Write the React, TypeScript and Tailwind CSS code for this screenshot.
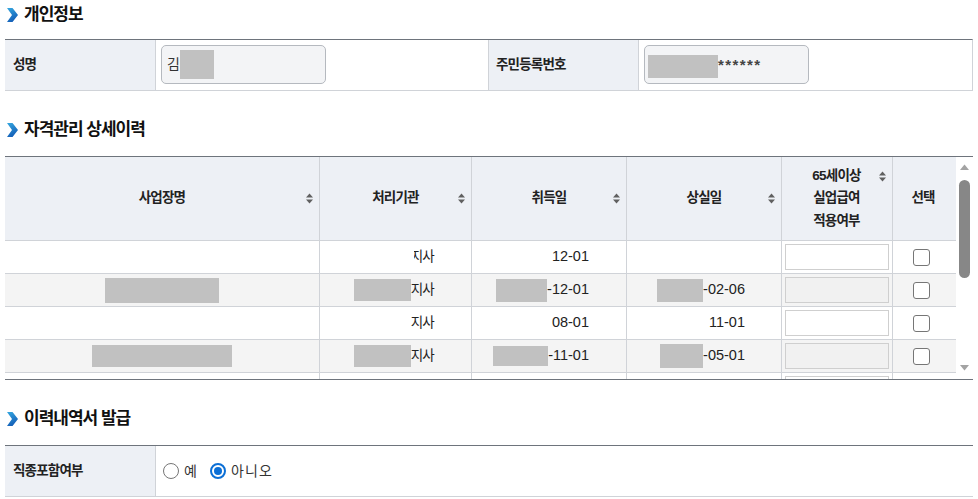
import React from "react";

const ko = "font-['Liberation_Sans','Noto_Sans_CJK_KR',sans-serif]";

function Chevron() {
  return (
    <svg width="11" height="14" viewBox="0 0 11 14" className="shrink-0">
      <defs>
        <linearGradient id="cg" x1="0" y1="0" x2="0.4" y2="1">
          <stop offset="0" stopColor="#35a8e0" />
          <stop offset="1" stopColor="#1560b8" />
        </linearGradient>
      </defs>
      <polygon points="0,0 5.5,0 11,7 5.5,14 0,14 5,7" fill="url(#cg)" />
    </svg>
  );
}

function Title({ text, pt }: { text: string; pt: string }) {
  return (
    <div className={`flex items-center gap-[6px] pl-[2px] ${pt}`}>
      <Chevron />
      <span className="text-[17px] leading-[22px] font-bold tracking-[-1px] text-[#111]">{text}</span>
    </div>
  );
}

function Sort() {
  return (
    <svg width="7" height="11" viewBox="0 0 7 11">
      <polygon points="0,4.5 3.5,0.5 7,4.5" fill="#606060" />
      <polygon points="0,6.5 7,6.5 3.5,10.5" fill="#606060" />
    </svg>
  );
}

function Box({ w, h = 23 }: { w: number; h?: number }) {
  return <span className="inline-block bg-[#c1c1c1] align-middle" style={{ width: w, height: h }} />;
}

function Check() {
  return <span className="block w-[17px] h-[17px] rounded-[3px] border border-[#767676] bg-white" />;
}

function Radio({ checked }: { checked?: boolean }) {
  if (checked)
    return (
      <span className="flex items-center justify-center w-[16px] h-[16px] rounded-full border-[2px] border-[#0b6fd6] bg-white">
        <span className="block w-[8px] h-[8px] rounded-full bg-[#0b6fd6]" />
      </span>
    );
  return <span className="block w-[16px] h-[16px] rounded-full border border-[#767676] bg-white" />;
}

const widths = ["w-[315px]", "w-[152px]", "w-[155px]", "w-[155px]", "w-[111px]", "w-[63px]"];

type Row = {
  gray: boolean;
  c1?: React.ReactNode;
  c2?: React.ReactNode;
  c3?: React.ReactNode;
  c4?: React.ReactNode;
};

const num = "text-[14.5px] text-[#222]";
const kor = "text-[13.5px] tracking-[-0.8px] text-[#222]";
const lbl = "text-[13.5px] font-bold tracking-[-0.8px] text-[#222]";

const rows: Row[] = [
  {
    gray: false,
    c2: (
      <span className="flex items-center">
        <span className="relative z-10 inline-block w-[6px] h-[22px] bg-white -mr-[3px]" />
        <span className={kor}>지사</span>
      </span>
    ),
    c3: <span className={num}>12-01</span>,
  },
  {
    gray: true,
    c1: <Box w={114} h={25} />,
    c2: (
      <span className="flex items-center">
        <Box w={57} h={22} />
        <span className={kor}>지사</span>
      </span>
    ),
    c3: (
      <span className="flex items-center">
        <Box w={51} h={23} />
        <span className={num}>-12-01</span>
      </span>
    ),
    c4: (
      <span className="flex items-center">
        <Box w={46} h={23} />
        <span className={num}>-02-06</span>
      </span>
    ),
  },
  {
    gray: false,
    c2: <span className={kor}>지사</span>,
    c3: <span className={num}>08-01</span>,
    c4: <span className={num}>11-01</span>,
  },
  {
    gray: true,
    c1: <Box w={140} h={22} />,
    c2: (
      <span className="flex items-center">
        <Box w={57} h={22} />
        <span className={kor}>지사</span>
      </span>
    ),
    c3: (
      <span className="flex items-center">
        <Box w={55} h={20} />
        <span className={num}>-11-01</span>
      </span>
    ),
    c4: (
      <span className="flex items-center">
        <Box w={43} h={24} />
        <span className={num}>-05-01</span>
      </span>
    ),
  },
  { gray: false },
];

export default function App() {
  return (
    <div className={`w-[978px] h-[499px] overflow-hidden bg-white ${ko}`}>
      <div className="ml-[5px] w-[968px]">
        {/* 개인정보 */}
        <div className="h-[39px]">
          <Title text="개인정보" pt="pt-[4px]" />
        </div>
        <div className="flex h-[52px] border-t border-b border-r border-t-[#6e747c] border-b-[#d0d3d8] border-r-[#d0d3d8]">
          <div className="w-[151px] shrink-0 bg-[#edf0f5] border-r border-[#d0d3d8] flex items-center pl-[8px]">
            <span className={lbl}>성명</span>
          </div>
          <div className="w-[333px] shrink-0 border-r border-[#d0d3d8] pl-[5px] pt-[5px]">
            <div className="w-[165px] h-[39px] rounded-[5px] border border-[#b5b9bf] bg-[#f3f4f6] flex items-center pl-[5px]">
              <span className="text-[14px] text-[#333]">김</span>
              <span className="inline-block w-[34px] h-[29px] bg-[#c1c1c1]" />
            </div>
          </div>
          <div className="w-[150px] shrink-0 bg-[#edf0f5] border-r border-[#d0d3d8] flex items-center pl-[7px]">
            <span className={lbl}>주민등록번호</span>
          </div>
          <div className="flex-1 pl-[5px] pt-[5px]">
            <div className="w-[165px] h-[39px] rounded-[5px] border border-[#b5b9bf] bg-[#f3f4f6] flex items-center pl-[3px]">
              <span className="inline-block w-[70px] h-[23px] bg-[#c1c1c1] mt-[3px]" />
              <span className="text-[15px] font-bold tracking-[1.4px] text-[#444] mt-[2px]">******</span>
            </div>
          </div>
        </div>

        {/* 자격관리 상세이력 */}
        <div className="h-[65px]">
          <Title text="자격관리 상세이력" pt="pt-[28px]" />
        </div>
        <div className="flex border-t border-b border-[#6e747c] h-[224px]">
          <div className="w-[951px] shrink-0 flex flex-col">
            <div className="flex h-[84px] shrink-0 bg-[#edf0f5] border-b border-[#d0d3d8]">
              {["사업장명", "처리기관", "취득일", "상실일"].map((t, i) => (
                <div
                  key={t}
                  className={`${widths[i]} shrink-0 relative flex items-center justify-center border-r border-[#d0d3d8]`}
                >
                  <span className={lbl}>{t}</span>
                  <span className="absolute right-[6px] top-[36px] flex">
                    <Sort />
                  </span>
                </div>
              ))}
              <div className={`${widths[4]} shrink-0 relative flex flex-col items-center justify-center border-r border-[#d0d3d8] pr-[1px]`}>
                <span className={`${lbl} leading-[22.5px]`}>65세이상</span>
                <span className={`${lbl} leading-[22.5px]`}>실업급여</span>
                <span className={`${lbl} leading-[22.5px]`}>적용여부</span>
                <span className="absolute right-[6px] top-[14px] flex">
                  <Sort />
                </span>
              </div>
              <div className={`${widths[5]} shrink-0 flex items-center justify-center pr-[3px]`}>
                <span className={lbl}>선택</span>
              </div>
            </div>
            <div className="flex-1 overflow-hidden">
              {rows.map((r, idx) => (
                <div
                  key={idx}
                  className={`flex h-[33px] border-b border-[#d0d3d8] ${r.gray ? "bg-[#f4f4f4]" : "bg-white"}`}
                >
                  <div className={`${widths[0]} shrink-0 flex items-center justify-center border-r border-[#d0d3d8]`}>
                    {r.c1}
                  </div>
                  <div className={`${widths[1]} shrink-0 flex items-center justify-end pr-[37px] border-r border-[#d0d3d8]`}>
                    {r.c2}
                  </div>
                  <div className={`${widths[2]} shrink-0 flex items-center justify-end pr-[37px] border-r border-[#d0d3d8]`}>
                    {r.c3}
                  </div>
                  <div className={`${widths[3]} shrink-0 flex items-center justify-end pr-[36px] border-r border-[#d0d3d8]`}>
                    {r.c4}
                  </div>
                  <div className={`${widths[4]} shrink-0 flex items-center pl-[3px] border-r border-[#d0d3d8]`}>
                    <span
                      className={`block w-[104px] h-[26px] border border-[#cfcfcf] ${r.gray ? "bg-[#f1f1f1]" : "bg-white"}`}
                    />
                  </div>
                  <div className={`${widths[5]} shrink-0 flex items-center pl-[20px]`}>
                    <Check />
                  </div>
                </div>
              ))}
            </div>
          </div>
          {/* scrollbar */}
          <div className="w-[17px] shrink-0 flex flex-col items-center bg-white">
            <div className="h-[19px] flex items-center justify-center">
              <svg width="9" height="6" viewBox="0 0 9 6">
                <polygon points="0,6 4.5,0.5 9,6" fill="#a3a3a3" />
              </svg>
            </div>
            <div className="mt-[4px] w-[11px] h-[98px] rounded-full bg-[#878787]" />
            <div className="flex-1" />
            <div className="h-[22px] flex items-center justify-center">
              <svg width="9" height="6" viewBox="0 0 9 6">
                <polygon points="0,0 9,0 4.5,5.5" fill="#a3a3a3" />
              </svg>
            </div>
          </div>
        </div>

        {/* 이력내역서 발급 */}
        <div className="h-[65px]">
          <Title text="이력내역서 발급" pt="pt-[28px]" />
        </div>
        <div className="flex h-[52px] border-t border-b border-t-[#6e747c] border-b-[#d0d3d8]">
          <div className="w-[151px] shrink-0 bg-[#edf0f5] border-r border-[#d0d3d8] flex items-center pl-[8px]">
            <span className={lbl}>직종포함여부</span>
          </div>
          <div className="flex-1 flex items-center pl-[7px]">
            <Radio />
            <span className="ml-[5px] text-[14px] text-[#333]">예</span>
            <span className="ml-[13px]">
              <Radio checked />
            </span>
            <span className="ml-[5px] text-[14px] tracking-[1.2px] text-[#333]">아니오</span>
          </div>
        </div>
      </div>
    </div>
  );
}
